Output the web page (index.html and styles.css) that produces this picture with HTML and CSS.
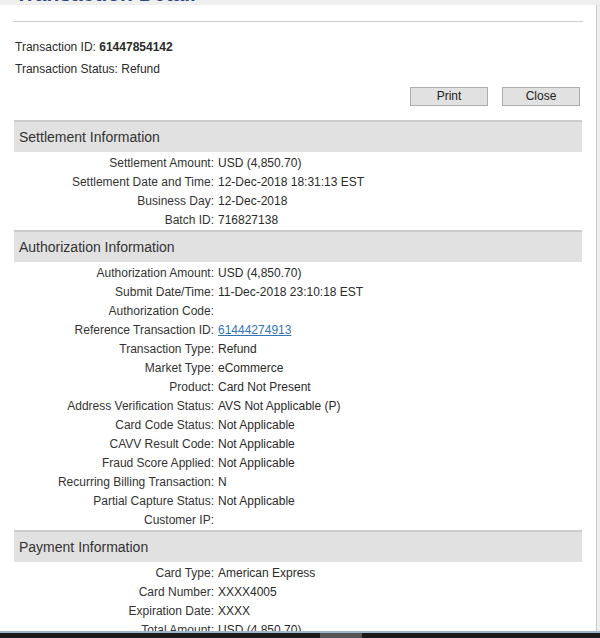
FILE: index.html
```html
<!DOCTYPE html>
<html>
<head>
<meta charset="utf-8">
<title>Transaction Detail</title>
<link rel="stylesheet" href="styles.css">
</head>
<body>
<div class="topstrip"><h1 class="title">Transaction Detail</h1></div>
<div class="panel">
  <div class="content">
    <hr class="rule">
    <div class="summary">
      <div class="sumline">Transaction ID: <b>61447854142</b></div>
      <div class="sumline">Transaction Status: Refund</div>
    </div>
    <div class="actions">
      <button class="btn">Print</button>
      <button class="btn">Close</button>
    </div>

    <div class="section">
      <div class="sechead">Settlement Information</div>
      <div class="rows">
        <div class="lbl">Settlement Amount:</div><div class="val">USD (4,850.70)</div>
        <div class="lbl">Settlement Date and Time:</div><div class="val">12-Dec-2018 18:31:13 EST</div>
        <div class="lbl">Business Day:</div><div class="val">12-Dec-2018</div>
        <div class="lbl">Batch ID:</div><div class="val">716827138</div>
      </div>
    </div>

    <div class="section">
      <div class="sechead">Authorization Information</div>
      <div class="rows">
        <div class="lbl">Authorization Amount:</div><div class="val">USD (4,850.70)</div>
        <div class="lbl">Submit Date/Time:</div><div class="val">11-Dec-2018 23:10:18 EST</div>
        <div class="lbl">Authorization Code:</div><div class="val"></div>
        <div class="lbl">Reference Transaction ID:</div><div class="val"><a class="link" href="#">61444274913</a></div>
        <div class="lbl">Transaction Type:</div><div class="val">Refund</div>
        <div class="lbl">Market Type:</div><div class="val">eCommerce</div>
        <div class="lbl">Product:</div><div class="val">Card Not Present</div>
        <div class="lbl">Address Verification Status:</div><div class="val">AVS Not Applicable (P)</div>
        <div class="lbl">Card Code Status:</div><div class="val">Not Applicable</div>
        <div class="lbl">CAVV Result Code:</div><div class="val">Not Applicable</div>
        <div class="lbl">Fraud Score Applied:</div><div class="val">Not Applicable</div>
        <div class="lbl">Recurring Billing Transaction:</div><div class="val">N</div>
        <div class="lbl">Partial Capture Status:</div><div class="val">Not Applicable</div>
        <div class="lbl">Customer IP:</div><div class="val"></div>
      </div>
    </div>

    <div class="section">
      <div class="sechead">Payment Information</div>
      <div class="rows">
        <div class="lbl">Card Type:</div><div class="val">American Express</div>
        <div class="lbl">Card Number:</div><div class="val">XXXX4005</div>
        <div class="lbl">Expiration Date:</div><div class="val">XXXX</div>
        <div class="lbl">Total Amount:</div><div class="val">USD (4,850.70)</div>
      </div>
    </div>
  </div>
</div>
<div class="taskbar"><span class="tb-hi"></span></div>
</body>
</html>
```

FILE: styles.css
```css
html, body {
  margin: 0;
  padding: 0;
  height: 638px;
  overflow: hidden;
}
body {
  background: #efefef;
  font-family: "Liberation Sans", Arial, sans-serif;
  font-size: 12px;
  color: #2a2a2a;
}
.topstrip {
  height: 5px;
  overflow: hidden;
  padding-left: 15px;
}
.title {
  margin: -18px 0 0 0;
  font-size: 21px;
  line-height: 24px;
  font-weight: bold;
  color: #2d4a78;
}
.panel {
  width: 596px;
  background: #fff;
  border-right: 1px solid #c9c9c9;
  height: 700px;
}
.content {
  padding: 0 13px 0 13px;
  width: 570px;
}
.rule {
  margin: 0;
  padding-top: 16px;
  border: 0;
  border-bottom: 1px solid #cfcfcf;
  height: 0;
}
.summary {
  padding-top: 14px;
  padding-left: 2px;
}
.sumline {
  line-height: 22px;
  height: 22px;
}
.sumline b {
  font-weight: bold;
}
.actions {
  display: flex;
  justify-content: flex-end;
  gap: 14px;
  padding-top: 7px;
  padding-right: 3px;
}
.btn {
  width: 78px;
  height: 19px;
  padding: 0;
  background: #e1e1e1;
  border: 1px solid #adadad;
  border-radius: 0;
  font-family: "Liberation Sans", Arial, sans-serif;
  font-size: 12px;
  color: #222;
  line-height: 17px;
}
.section {
  margin-left: 1px;
  width: 568px;
}
.actions + .section {
  margin-top: 14px;
}
.sechead {
  height: 30px;
  line-height: 31px;
  border-top: 2px solid #cbcbcb;
  background: #e1e1e1;
  padding-left: 5px;
  font-size: 14px;
  color: #333;
}
.rows {
  display: grid;
  grid-template-columns: 200px 1fr;
  column-gap: 4px;
  padding: 2px 0 0 0;
}
.lbl, .val {
  height: 19px;
  line-height: 19px;
  white-space: nowrap;
}
.lbl {
  text-align: right;
  color: #333;
}
.val {
  color: #2a2a2a;
}
.link {
  color: #3274b8;
  text-decoration: underline;
}
.taskbar {
  position: fixed;
  left: 0;
  right: 0;
  bottom: 0;
  height: 5px;
  background: #1a1a1a;
  border-top: 2px solid #9fb6c8;
}
.tb-hi {
  position: absolute;
  left: 320px;
  top: 0;
  width: 42px;
  height: 5px;
  background: #555;
}
```
